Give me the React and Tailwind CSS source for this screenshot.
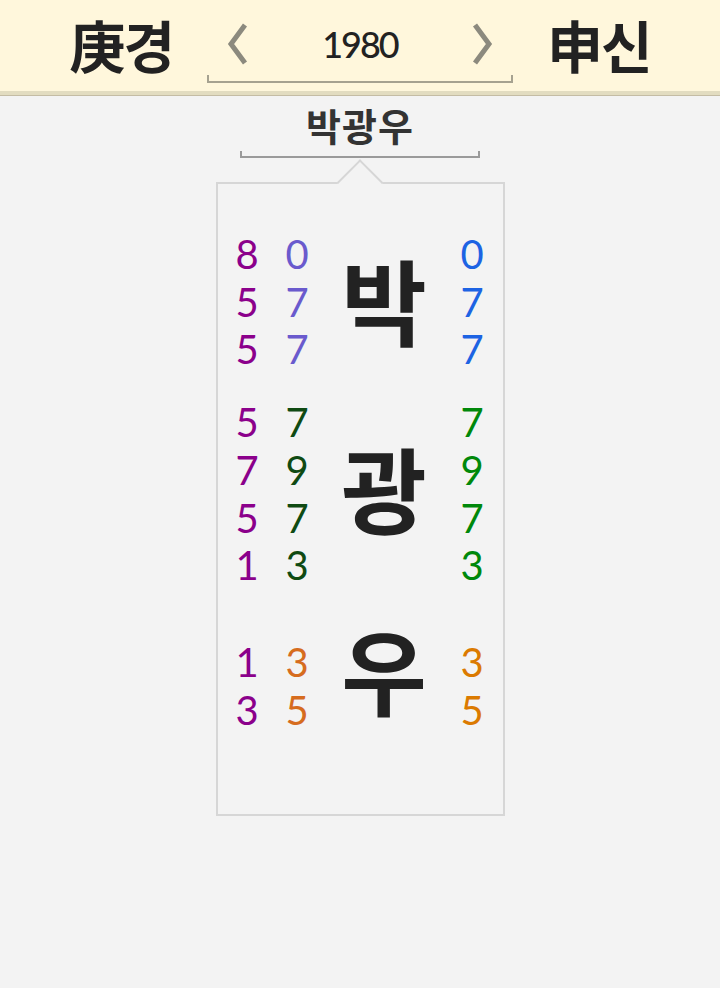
import React from "react";

const KR = { fontFamily: '"Noto Sans CJK KR", "Noto Sans", sans-serif' };
const NUM = { fontFamily: 'Lato, "Open Sans", sans-serif' };

const groups = [
  {
    ch: "박",
    c1: "text-[#8b008b]",
    c2: "text-[#6a5acd]",
    c3: "text-[#1d63e3]",
    rows: [
      ["8", "0"],
      ["5", "7"],
      ["5", "7"],
    ],
    mt: "mt-[47px]",
    shift: "-mt-[8px]",
  },
  {
    ch: "광",
    c1: "text-[#8b008b]",
    c2: "text-[#0f4a12]",
    c3: "text-[#00880a]",
    rows: [
      ["5", "7"],
      ["7", "9"],
      ["5", "7"],
      ["1", "3"],
    ],
    mt: "mt-[25px]",
    shift: "-mt-[16px]",
  },
  {
    ch: "우",
    c1: "text-[#8b008b]",
    c2: "text-[#d66c1e]",
    c3: "text-[#db7a00]",
    rows: [
      ["1", "3"],
      ["3", "5"],
    ],
    mt: "mt-[49px]",
    shift: "-mt-[36px]",
  },
];

const Chevron = ({ dir }) => (
  <svg width="26" height="44" viewBox="0 0 26 44" className="shrink-0">
    <polyline
      points={dir === "left" ? "20,3 6,22 20,41" : "6,3 20,22 6,41"}
      fill="none"
      stroke="#8c8a7e"
      strokeWidth="5"
    />
  </svg>
);

const Group = ({ g }) => (
  <div className={`flex ${g.mt}`}>
    <div className="flex flex-col w-[68px] pl-[18px] text-[40px] leading-[47.7px]" style={NUM}>
      {g.rows.map((r, i) => (
        <span key={i} className={`${g.c1} text-center w-[22px]`}>{r[0]}</span>
      ))}
    </div>
    <div className="flex flex-col w-[22px] text-[40px] leading-[47.7px]" style={NUM}>
      {g.rows.map((r, i) => (
        <span key={i} className={`${g.c2} text-center`}>{r[1]}</span>
      ))}
    </div>
    <div className="flex-1 flex items-center justify-center">
      <span className={`text-[93px] font-bold leading-none text-[#222] ${g.shift}`} style={KR}>
        {g.ch}
      </span>
    </div>
    <div className="flex flex-col w-[22px] mr-[20px] text-[40px] leading-[47.7px]" style={NUM}>
      {g.rows.map((r, i) => (
        <span key={i} className={`${g.c3} text-center`}>{r[1]}</span>
      ))}
    </div>
  </div>
);

export default function App() {
  return (
    <div className="min-h-[988px] bg-[#f3f3f3]">
      <header className="h-[95px] bg-[#fff7dc] border-b-[4px] border-[#e2dcc0] shadow-[0_1px_0_#c4bca4] flex items-center justify-center gap-[34px]">
        <span className="text-[56px] font-bold text-[#222] leading-none tracking-[-2px] -mt-1" style={KR}>
          庚경
        </span>
        <div className="relative w-[306px] h-[70px] flex items-center justify-between px-[18px] -mt-1">
          <Chevron dir="left" />
          <span className="text-[36px] text-[#222] leading-none tracking-[-2px] font-medium" style={NUM}>
            1980
          </span>
          <Chevron dir="right" />
          <div className="absolute left-0 right-0 bottom-[-4px] h-[8px] border-2 border-t-0 border-[#a6a290]" />
        </div>
        <span className="text-[56px] font-bold text-[#222] leading-none tracking-[-2px] -mt-1" style={KR}>
          申신
        </span>
      </header>

      <div className="flex flex-col items-center">
        <div className="mt-[4px] text-[38px] font-bold text-[#333] leading-[52px] tracking-[1px]" style={KR}>
          박광우
        </div>
        <div className="w-[240px] h-[7px] border-2 border-t-0 border-[#9a9a9a]" />

        <div className="relative mt-[24px] w-[289px] h-[634px] border-2 border-[#d6d6d6] bg-[#f3f3f3]">
          <div className="absolute left-1/2 -translate-x-1/2 -top-[18px] w-[33px] h-[33px] rotate-45 border-l-2 border-t-2 border-[#d6d6d6] bg-[#f3f3f3]" />
          <div className="relative flex flex-col">
            {groups.map((g) => (
              <Group key={g.ch} g={g} />
            ))}
          </div>
        </div>
      </div>
    </div>
  );
}
